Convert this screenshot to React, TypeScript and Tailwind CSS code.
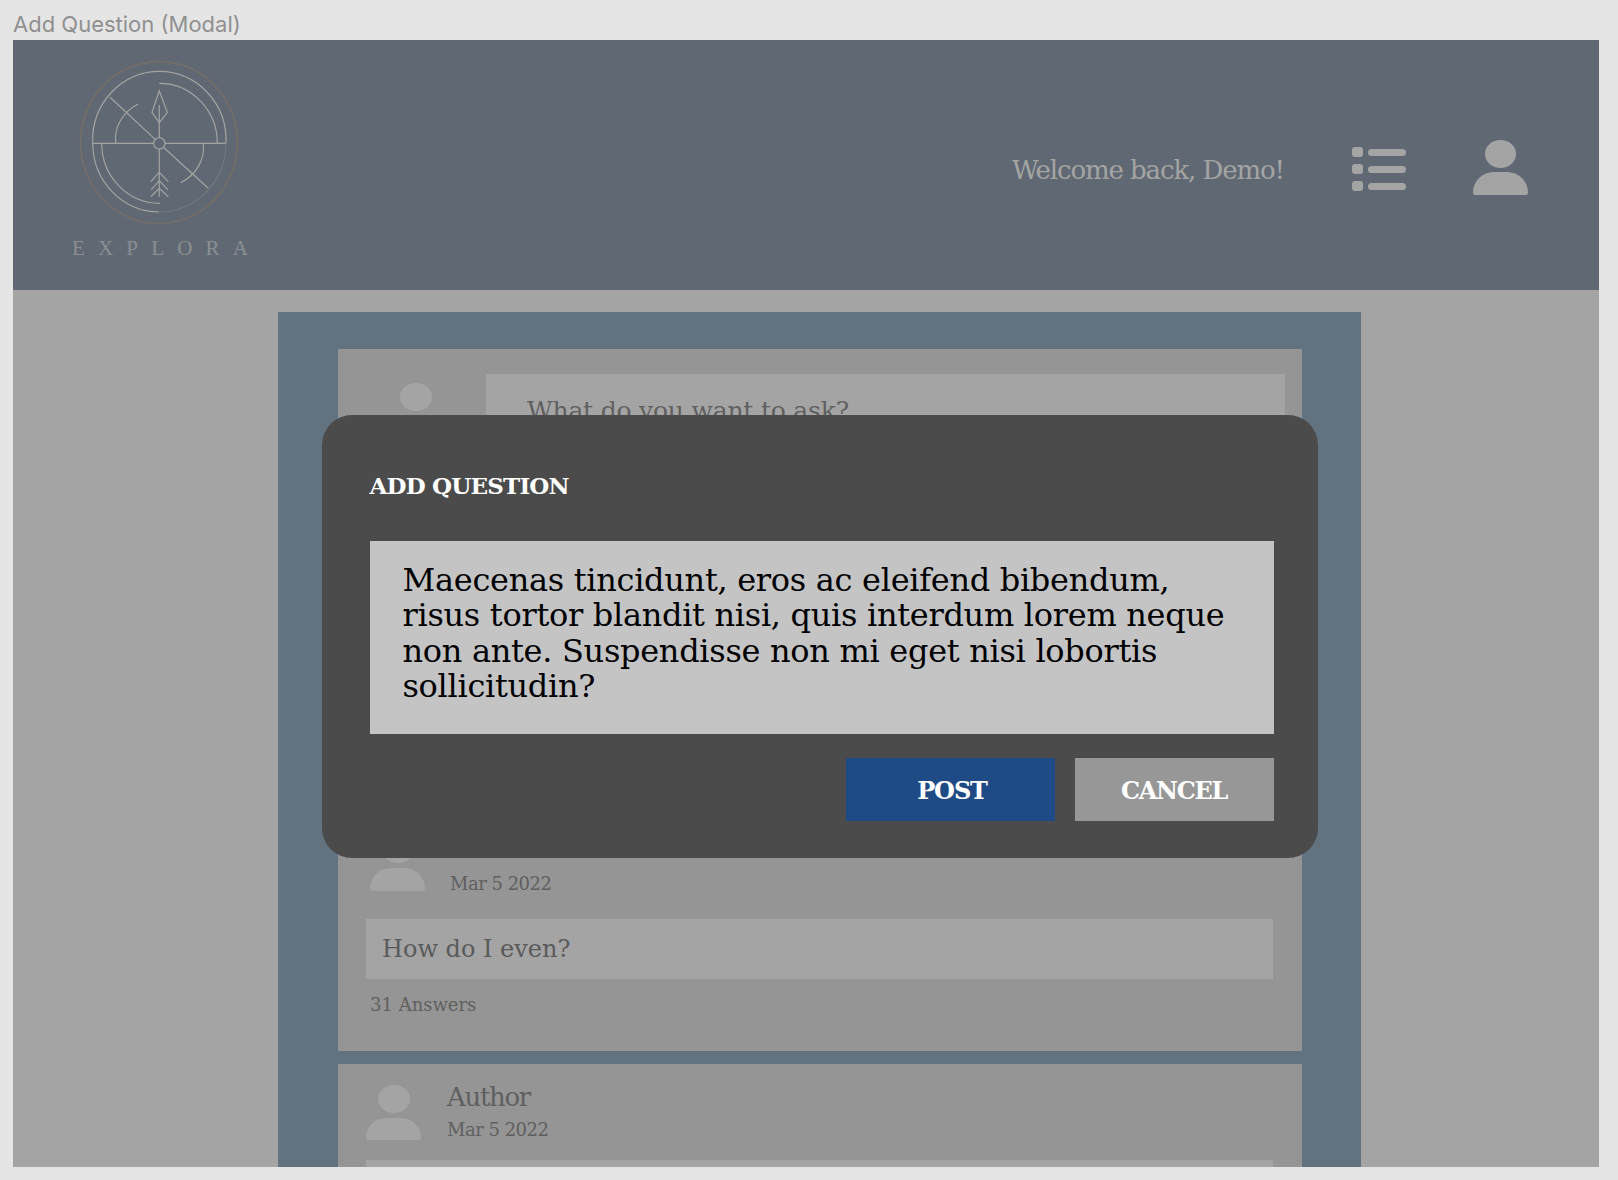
import React from "react";

function Logo() {
    return (
        <svg viewBox="75 55 170 175" className="w-[170px] h-[175px]" fill="none">
            <ellipse cx="159" cy="142.5" rx="78.5" ry="81" stroke="#706d6b" strokeWidth="2" />
            <g stroke="#a3a3a3" strokeWidth="1.2">
                <path d="M226 143 A66.7 69 0 1 0 92.7 143 A66.7 69 0 0 0 159 212" />
                <path d="M226 143 A66.7 69 0 0 1 159 212" strokeOpacity="0.25" />
                <path d="M92.7 143.3 H153.6 M165 143.3 H225.7" />
                <circle cx="159.3" cy="143.3" r="5.7" />
                <path d="M159.3 105 V137.6 M159.3 149 V196.7" />
                <path d="M159.3 90.7 L152 112.3 L159.3 122.7 L167.3 112.3 Z" />
                <path d="M110 97.3 L155.2 139.4 M163.4 147.2 L208.3 188.3" />
                <path d="M159.3 83.3 A58 60 0 0 1 217.3 143.3" />
                <path d="M138.3 104 A44 40 0 0 0 115.7 143.3" />
                <path d="M101.7 143.3 A58 60 0 0 0 160 203.3" />
                <path d="M203.3 143.3 A44 40 0 0 1 180.7 182.7" />
                <path d="M150.7 181.7 L159.3 172.3 L168.3 181.7 M151.3 189.7 L159.3 180.7 L167.7 189.7 M150.7 196.7 L159.3 188.3 L168.3 196.7" />
            </g>
        </svg>
    );
}

function ListIcon() {
    return (
        <div className="flex flex-col gap-[7px] w-[54px]">
            {[0, 1, 2].map((i) => (
                <div key={i} className="flex items-center gap-[5px]">
                    <span className="w-[11px] h-[10px] rounded-[3px] bg-[#a4a4a4]" />
                    <span className="flex-1 h-[7px] rounded-full bg-[#a4a4a4]" />
                </div>
            ))}
        </div>
    );
}

function UserIcon({ head, body, headH, bodyH, gap }: { head: string; body: string; headH: string; bodyH: string; gap: string }) {
    return (
        <div className={`flex flex-col items-center ${gap}`}>
            <span className={`${head} ${headH} rounded-[50%] bg-[#a4a4a4]`} />
            <span className={`${body} ${bodyH} rounded-t-[28px] rounded-b-[3px] bg-[#a4a4a4]`} />
        </div>
    );
}

export default function App() {
    return (
        <div className="h-[1180px] overflow-hidden bg-[#e5e5e5] pl-[13px] font-['DejaVu_Serif',serif]">
            <div className="h-[40px] pt-[9px] font-['Inter',sans-serif] text-[22px] leading-[30px] text-[#909090]">
                Add Question (Modal)
            </div>

            <div className="relative w-[1586px] h-[1127px] overflow-hidden bg-[#a4a4a4]">
                <header className="flex h-[250px] items-start bg-[#606973]">
                    <div className="ml-[62px] mt-[15px] flex w-[170px] flex-col items-center">
                        <Logo />
                        <span className="mt-[6px] mr-[-13px] whitespace-nowrap font-['Liberation_Serif',serif] text-[21px] leading-[24px] tracking-[13.2px] text-[#8b8f94]">
                            EXPLORA
                        </span>
                    </div>
                    <span className="ml-[767px] mt-[112px] text-[26px] leading-[36px] tracking-[-1.1px] text-[#a4a4a4]">
                        Welcome back, Demo!
                    </span>
                    <div className="ml-[68px] mt-[107px]">
                        <ListIcon />
                    </div>
                    <div className="ml-[67px] mt-[100px]">
                        <UserIcon head="w-[31px]" headH="h-[28px]" body="w-[55px]" bodyH="h-[23px]" gap="gap-[4px]" />
                    </div>
                </header>

                <div className="pl-[265px] pt-[22px]">
                    <section className="w-[1083px] bg-[#63727f] pl-[60px] pr-[59px] pt-[37px] pb-[40px]">
                        <div className="flex h-[460px] items-start bg-[#959595]">
                            <div className="ml-[62px] mt-[34px]">
                                <span className="block w-[32px] h-[28px] rounded-[50%] bg-[#a4a4a4]" />
                            </div>
                            <div className="ml-[54px] mt-[25px] h-[120px] w-[799px] bg-[#a4a4a4] pl-[41px] pt-[21px] text-[25px] leading-[32px] tracking-[-0.2px] text-[#5f5f5f]">
                                What do you want to ask?
                            </div>
                        </div>

                        <article className="mt-[13px] h-[229px] bg-[#959595] pt-[13px]">
                            <div className="flex items-start pl-[32px]">
                                <UserIcon head="w-[32px]" headH="h-[28px]" body="w-[55px]" bodyH="h-[23px]" gap="gap-[5px]" />
                                <div className="ml-[25px] mt-[-2px]">
                                    <div className="text-[26px] leading-[32px] tracking-[-1.3px] text-[#5f5f5f]">Author</div>
                                    <div className="mt-[7px] text-[18px] leading-[24px] tracking-[-0.5px] text-[#5f5f5f]">Mar 5 2022</div>
                                </div>
                            </div>
                            <div className="ml-[28px] mt-[23px] flex h-[60px] w-[907px] items-center pl-[16px] bg-[#a4a4a4] text-[24px] text-[#5a5a5a]">
                                How do I even?
                            </div>
                            <div className="ml-[32px] mt-[14px] text-[18px] leading-[24px] text-[#5f5f5f]">31 Answers</div>
                        </article>

                        <article className="mt-[13px] h-[229px] bg-[#959595] pt-[21px]">
                            <div className="flex items-start pl-[28px]">
                                <UserIcon head="w-[32px]" headH="h-[28px]" body="w-[55px]" bodyH="h-[22px]" gap="gap-[5px]" />
                                <div className="ml-[26px] mt-[-4px]">
                                    <div className="text-[26px] leading-[32px] tracking-[-1.3px] text-[#5f5f5f]">Author</div>
                                    <div className="mt-[5px] text-[18px] leading-[24px] tracking-[-0.5px] text-[#5f5f5f]">Mar 5 2022</div>
                                </div>
                            </div>
                            <div className="ml-[28px] mt-[18px] h-[60px] w-[907px] bg-[#a4a4a4]" />
                        </article>
                    </section>
                </div>

                <div className="absolute left-[308.5px] top-[375px] h-[443px] w-[996px] rounded-[30px] bg-[#4b4b4b] pl-[48px] pt-[55px]">
                    <h2 className="text-[23px] leading-[32px] font-bold tracking-[-0.8px] text-white">ADD QUESTION</h2>
                    <div className="mt-[39px] h-[193px] w-[904px] bg-[#c4c4c4] pl-[33px] pt-[22px] text-[32px] leading-[35.4px] tracking-[-0.3px] text-black">
                        Maecenas tincidunt, eros ac eleifend bibendum,
                        <br />
                        risus tortor blandit nisi, quis interdum lorem neque
                        <br />
                        non ante. Suspendisse non mi eget nisi lobortis
                        <br />
                        sollicitudin?
                    </div>
                    <div className="mt-[24px] flex w-[904px] justify-end gap-[20px]">
                        <button className="h-[63px] w-[209px] bg-[#1e4a85] pl-[4px] pt-[2px] text-[24px] font-bold tracking-[-1.1px] text-white">POST</button>
                        <button className="h-[63px] w-[199px] bg-[#979797] pt-[2px] text-[24px] font-bold tracking-[-1.3px] text-white">CANCEL</button>
                    </div>
                </div>
            </div>
        </div>
    );
}
